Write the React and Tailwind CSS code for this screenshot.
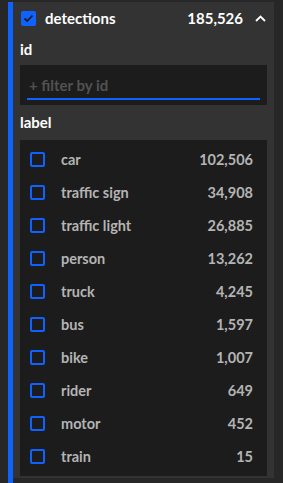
const labels = [
  ["car", "102,506"],
  ["traffic sign", "34,908"],
  ["traffic light", "26,885"],
  ["person", "13,262"],
  ["truck", "4,245"],
  ["bus", "1,597"],
  ["bike", "1,007"],
  ["rider", "649"],
  ["motor", "452"],
  ["train", "15"],
];

function LabelRow({ name, count }) {
  return (
    <div className="flex items-center h-[33px] pl-[10px] pr-[14px]">
      <span className="w-[15px] h-[15px] border-2 border-[#1062ff] rounded-[2px] shrink-0" />
      <span className="ml-[16px] flex-1 text-[14.5px] font-bold text-[#b4b4b4]">{name}</span>
      <span className="text-[14.5px] font-bold text-[#b4b4b4]">{count}</span>
    </div>
  );
}

export default function App() {
  return (
    <div
      className="w-[283px] h-[483px] bg-[#272727] pl-2 pr-[9px] pt-[2px] overflow-hidden"
      style={{ fontFamily: "Lato, 'Noto Sans', sans-serif" }}
    >
      <div className="h-full border-l-[5px] border-[#1062ff]">
        <div className="bg-[#333333] pb-[2px]">
          <div className="flex items-center h-[32px] pl-[8px] pr-[8px]">
            <span className="w-[15px] h-[15px] bg-[#1062ff] rounded-[2px] flex items-center justify-center shrink-0">
              <svg width="11" height="9" viewBox="0 0 11 9">
                <path d="M1.5 4.5 L4.2 7 L9.5 1.5" fill="none" stroke="#1b1b1b" strokeWidth="1.8" />
              </svg>
            </span>
            <span className="ml-[9px] flex-1 text-[15px] font-bold text-white">detections</span>
            <span className="text-[15px] font-bold text-white">185,526</span>
            <svg className="ml-[12px]" width="11" height="7" viewBox="0 0 11 7">
              <path d="M1 6 L5.5 1.5 L10 6" fill="none" stroke="#ffffff" strokeWidth="1.8" />
            </svg>
          </div>
          <div className="px-[7px]">
            <div className="h-[31px] flex items-center text-[15px] font-bold text-white">id</div>
            <div className="bg-[#1c1c1c] h-[40px] px-[7px] pt-[8px]">
              <div className="border-b-2 border-[#1062ff] h-[27px] flex items-center pl-[2px] text-[15px] font-bold text-[#525252]">
                + filter by id
              </div>
            </div>
            <div className="h-[35px] flex items-center text-[15px] font-bold text-white">label</div>
            <div className="bg-[#1c1c1c] py-[3px]">
              {labels.map(([n, c]) => (
                <LabelRow key={n} name={n} count={c} />
              ))}
            </div>
          </div>
        </div>
      </div>
    </div>
  );
}
